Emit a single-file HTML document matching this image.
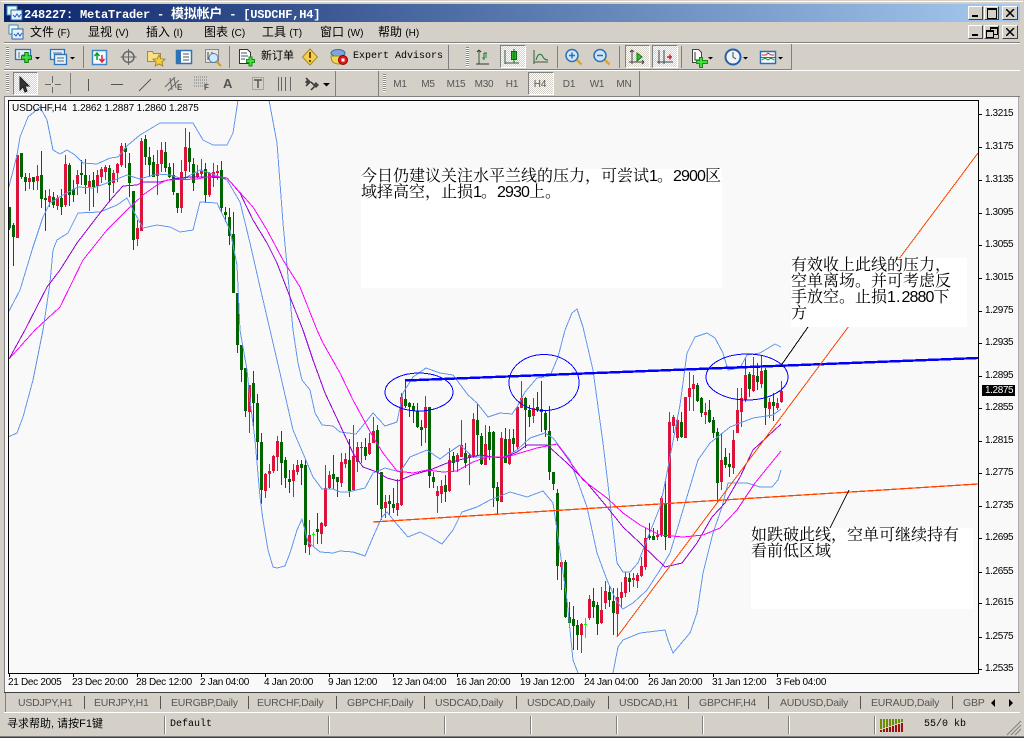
<!DOCTYPE html>
<html lang="zh"><head><meta charset="utf-8"><title>MetaTrader</title>
<style>
html,body{margin:0;padding:0;width:1024px;height:738px;overflow:hidden;background:#d4d0c8}
body{position:relative;font-family:"Liberation Sans","Noto Sans CJK SC",sans-serif}
.a,.t{position:absolute}
.t{white-space:nowrap}
.m{font-family:"Liberation Sans","WenQuanYi Zen Hei","Noto Sans CJK SC",sans-serif;font-size:12px;line-height:14px;color:#000;top:25px}
.m i{font-style:normal;font-size:10px}
.p{font-size:10px;color:#000;letter-spacing:-.4px;left:985px;line-height:10px}
.x{font-size:10px;color:#000;letter-spacing:-.3px;top:677px;line-height:11px}
.b{font-size:10.5px;color:#555;top:697px;line-height:12px;letter-spacing:-.2px}
.per{font-size:10px;color:#555;top:79px;line-height:11px;width:26px;text-align:center;letter-spacing:-.2px}
.btn{background:repeating-conic-gradient(#fff 0 25%,#d4d0c8 0 50%) 0 0/2px 2px;border:1px solid;border-color:#808080 #fff #fff #808080;box-sizing:border-box}
.wb{background:#d4d0c8;border:1px solid;border-color:#fff #404040 #404040 #fff;box-sizing:border-box;width:15px;height:14px}
.note{position:absolute;background:#fff;font-family:"Liberation Sans","WenQuanYi Zen Hei","Noto Serif CJK SC",sans-serif;font-size:16px;line-height:16px;color:#000;white-space:nowrap}
.note b{font-weight:normal;font-family:"Liberation Sans",sans-serif;letter-spacing:-.9px}
.note u{text-decoration:none;font-family:"Liberation Sans",sans-serif;letter-spacing:1px;margin-left:1px}
.mono{font-family:"Liberation Mono",monospace;font-size:10px;color:#000;line-height:12px}
.grip{position:absolute;width:3px;background:repeating-linear-gradient(#888 0 1px,#fff 1px 2px)}
</style></head><body>

<!-- title bar -->
<div class="a" style="left:1px;top:1px;width:1022px;height:1px;background:#fff"></div>
<div class="a" style="left:4px;top:4px;width:1016px;height:18px;background:linear-gradient(90deg,#0a246a,#a6caf0)"></div>
<svg class="a" style="left:6px;top:5px" width="18" height="16" viewBox="0 0 18 16"><rect x="1" y="1" width="10" height="9" fill="#dff" stroke="#4a8ab0"/><rect x="5" y="5" width="11" height="10" fill="#eef" stroke="#2a6a9a"/><path d="M7 10l2 2 2-3 2 3 2-3" stroke="#06c" fill="none"/></svg>
<div class="t" style="left:24px;top:6px;font:bold 12px/14px 'Liberation Mono','Noto Sans CJK SC',monospace;color:#fff;letter-spacing:-.2px">248227: MetaTrader - <span style="font:bold 13px/14px 'Noto Sans CJK SC',sans-serif">模拟帐户</span> - [USDCHF,H4]</div>
<div class="a wb" style="left:968px;top:6px"><div class="a" style="left:3px;top:8px;width:6px;height:2px;background:#000"></div></div>
<div class="a wb" style="left:984px;top:6px"><div class="a" style="left:2px;top:1px;width:8px;height:8px;border:1px solid #000;border-top-width:2px"></div></div>
<div class="a wb" style="left:1002px;top:6px;width:16px"><svg class="a" style="left:3px;top:2px" width="9" height="8"><path d="M0 0L8 8M8 0L0 8" stroke="#000" stroke-width="1.5"/></svg></div>
<!-- menu -->
<svg class="a" style="left:8px;top:24px" width="16" height="16" viewBox="0 0 16 16"><rect x="1" y="1" width="9" height="9" fill="#dff" stroke="#4a8ab0"/><rect x="4" y="5" width="11" height="10" fill="#eef" stroke="#2a6a9a"/><path d="M6 10l2 2 2-3 2 3 2-3" stroke="#06c" fill="none"/></svg>
<div class="t m" style="left:30px">文件 <i>(F)</i></div>
<div class="t m" style="left:88px">显视 <i>(V)</i></div>
<div class="t m" style="left:146px">插入 <i>(I)</i></div>
<div class="t m" style="left:204px">图表 <i>(C)</i></div>
<div class="t m" style="left:262px">工具 <i>(T)</i></div>
<div class="t m" style="left:320px">窗口 <i>(W)</i></div>
<div class="t m" style="left:378px">帮助 <i>(H)</i></div>
<div class="a wb" style="left:968px;top:25px"><div class="a" style="left:3px;top:8px;width:6px;height:2px;background:#000"></div></div>
<div class="a wb" style="left:984px;top:25px"><div class="a" style="left:5px;top:1px;width:6px;height:5px;border:1px solid #000;border-top-width:2px"></div><div class="a" style="left:1px;top:4px;width:6px;height:5px;border:1px solid #000;border-top-width:2px;background:#d4d0c8"></div></div>
<div class="a wb" style="left:1002px;top:25px;width:16px"><svg class="a" style="left:3px;top:2px" width="9" height="8"><path d="M0 0L8 8M8 0L0 8" stroke="#000" stroke-width="1.5"/></svg></div>

<!-- toolbar lines -->
<div class="a" style="left:4px;top:42px;width:1016px;height:1px;background:#808080"></div>
<div class="a" style="left:4px;top:43px;width:1016px;height:1px;background:#fff"></div>
<div class="a" style="left:4px;top:69px;width:787px;height:1px;background:#808080"></div>
<div class="a" style="left:791px;top:44px;width:1px;height:26px;background:#808080"></div>
<div class="a" style="left:4px;top:70px;width:1016px;height:1px;background:#fff"></div>
<div class="a" style="left:448px;top:45px;width:1px;height:24px;background:#808080"></div>
<div class="grip" style="left:6px;top:47px;height:20px"></div>
<div class="grip" style="left:466px;top:47px;height:20px"></div>
<div class="grip" style="left:6px;top:74px;height:18px"></div>
<div class="grip" style="left:383px;top:74px;height:18px"></div>
<div class="a" style="left:335px;top:71px;width:1px;height:25px;background:#808080"></div>
<div class="a" style="left:378px;top:71px;width:1px;height:25px;background:#808080"></div>
<div class="a" style="left:639px;top:71px;width:1px;height:25px;background:#808080"></div>

<!-- pressed buttons -->
<div class="a btn" style="left:13px;top:72px;width:25px;height:23px"></div>
<div class="a btn" style="left:500px;top:45px;width:26px;height:23px"></div>
<div class="a btn" style="left:625px;top:45px;width:25px;height:23px"></div>
<div class="a btn" style="left:652px;top:45px;width:26px;height:23px"></div>
<div class="a btn" style="left:528px;top:72px;width:26px;height:23px"></div>

<!-- toolbar icons -->
<svg class="a" style="left:0;top:43px" width="800" height="54" viewBox="0 43 800 54" fill="none">
 <!-- new chart -->
 <rect x="15.500" y="49.500" width="15" height="10" fill="#e4f0fb" stroke="#2f73b7" stroke-width="1.300"/><path d="M19 52v6M22 55h6" stroke="#667"/><path d="M21 57.500h11M26.500 52v11" stroke="#127a12" stroke-width="4.500"/><path d="M22 57.500h9M26.500 53v9" stroke="#3fe03f" stroke-width="2.500"/>
 <path d="M35 57h5l-2.500 2.500z" fill="#000"/>
 <!-- profiles -->
 <rect x="50.500" y="49.500" width="14" height="10" fill="#e4f0fb" stroke="#2f73b7" stroke-width="1.300"/><rect x="54.500" y="54.500" width="12" height="10" fill="#e4f0fb" stroke="#2f73b7" stroke-width="1.300"/><path d="M53 53h9M57 58h7M57 61h7" stroke="#667"/>
 <path d="M70 57h5l-2.500 2.500z" fill="#000"/>
 <rect x="83" y="46" width="1" height="22" fill="#808080"/>
 <!-- market watch -->
 <rect x="92.500" y="50.500" width="14" height="14" fill="#f6fbff" stroke="#3f86c6" stroke-width="1.500"/><path d="M97 60v-6M94.500 56l2.500-3 2.500 3" stroke="#0a9a2a" stroke-width="1.500"/><path d="M102 55v6M99.500 59l2.500 3 2.500-3" stroke="#d23" stroke-width="1.500"/>
 <!-- crosshair -->
 <circle cx="128.500" cy="57" r="5.500" stroke="#666" stroke-width="1.500"/><path d="M128.500 49v16M120.500 57h16" stroke="#666"/>
 <!-- folder star -->
 <path d="M147.500 51.500h5l1 2h7v8h-13z" fill="#f6e08a" stroke="#a68a30"/><path d="M159 55l1.800 3.700 4.200.5-3 2.800.8 4-3.800-2-3.800 2 .8-4-3-2.800 4.200-.5z" fill="#f3cf3a" stroke="#a68a30"/>
 <!-- navigator -->
 <rect x="176.500" y="50.500" width="15" height="13" fill="#fff" stroke="#2f73b7" stroke-width="1.500"/><rect x="177" y="51" width="4" height="12" fill="#2f73b7"/><path d="M183 54h6M183 57h6M183 60h6" stroke="#456"/>
 <!-- strategy tester -->
 <rect x="205.500" y="49.500" width="13" height="13" fill="#e6e6e6" stroke="#888"/><path d="M208 52v8M212 52v8" stroke="#444"/><circle cx="213.500" cy="58" r="4.500" fill="#cfe8fa" stroke="#4a80b0"/><path d="M217 62l4 4" stroke="#d69a20" stroke-width="2"/>
 <rect x="229" y="46" width="1" height="22" fill="#808080"/>
 <!-- new order -->
 <path d="M239.500 49.500h8l3 3v11h-11z" fill="#fff" stroke="#333"/><path d="M241 53h6M241 56h7M241 59h4" stroke="#456"/><path d="M246 61h9M250.500 56.500v10" stroke="#1a8a1a" stroke-width="4"/><path d="M247 61h7M250.500 57.500v8" stroke="#3fe03f" stroke-width="2"/>
 <!-- warning -->
 <path d="M310 49l7.500 8-7.500 8-7.500-8z" fill="#f6d04a" stroke="#a88a18"/><path d="M310 52v6M310 60v2" stroke="#6a4a00" stroke-width="2"/>
 <!-- EA -->
 <ellipse cx="338" cy="53" rx="7" ry="3.500" fill="#7ba6d8" stroke="#3a6a9a"/><path d="M331 56c0 7 4 8 9 8 3 0 3-3 3-5v-3z" fill="#f2d35a" stroke="#a08820"/><circle cx="343" cy="60" r="4.500" fill="#e01b1b" stroke="#800"/><rect x="341.500" y="58.500" width="3" height="3" fill="#fff"/>
 <!-- chart types -->
 <path d="M479 50v14M484 53v7M484 53h3" stroke="#3a5a3a"/><path d="M482 58h3M486 53v5" stroke="#0a9a2a"/><path d="M476 64h13M479 50l-2 2M479 50l2 2" stroke="#333"/>
 <path d="M505 50v14M505 63h14" stroke="#3a5a3a" fill="none"/><rect x="511.500" y="51.500" width="5" height="8" fill="#2db52d" stroke="#0a6a0a"/><path d="M514 49v14" stroke="#0a6a0a"/>
 <path d="M534 50v14M534 62h14" stroke="#3a5a3a"/><path d="M536 60c2-7 5-7 7-3 1 2 3 3 5 3" stroke="#0a7a2a"/>
 <rect x="557" y="46" width="1" height="22" fill="#808080"/>
 <!-- zoom in/out -->
 <circle cx="572" cy="55.500" r="6" fill="#cde6fa" stroke="#2f6fb0" stroke-width="1.500"/><path d="M569 55.500h6M572 52.500v6" stroke="#2f6fb0" stroke-width="1.500"/><path d="M577 60l4.500 4.500" stroke="#d9a528" stroke-width="2.500"/>
 <circle cx="600" cy="55.500" r="6" fill="#cde6fa" stroke="#2f6fb0" stroke-width="1.500"/><path d="M597 55.500h6" stroke="#2f6fb0" stroke-width="1.500"/><path d="M605 60l4.500 4.500" stroke="#d9a528" stroke-width="2.500"/>
 <rect x="619" y="46" width="1" height="22" fill="#808080"/>
 <!-- shift / autoscroll -->
 <path d="M632 50v14M629 62h15M632 50l-2 2M632 50l2 2M644 62l-2-2M644 62l-2 2" stroke="#444"/><path d="M637 53l5 4-5 4z" fill="#2fc02f" stroke="#0a7a0a"/>
 <path d="M659 50v14M664 50v14M657 62h16" stroke="#444"/><path d="M667 57h5M670 54.500v5" stroke="#c22" stroke-width="1.500"/>
 <rect x="681" y="46" width="1" height="22" fill="#808080"/>
 <!-- indicators -->
 <path d="M692.500 49.500h6l3 3v10h-9z" fill="#fff" stroke="#444"/><path d="M695 52v8h4" stroke="#333"/><path d="M696 62h12M701 57v11" stroke="#1a8a1a" stroke-width="4"/><path d="M697 62h10M701 58v9" stroke="#3fe03f" stroke-width="2"/>
 <path d="M708 57h5l-2.500 2.500z" fill="#000"/>
 <!-- clock -->
 <circle cx="733" cy="57" r="7.500" fill="#f0f4fa" stroke="#2360a8" stroke-width="2"/><path d="M733 52v5l3 2" stroke="#444"/>
 <path d="M743 57h5l-2.500 2.500z" fill="#000"/>
 <!-- templates -->
 <rect x="760.500" y="51.500" width="15" height="12" fill="#f4f8ff" stroke="#2f6fb0" stroke-width="1.500"/><path d="M762 55h4l2-2 3 2h3" stroke="#c33"/><path d="M762 60l3-2 3 2 3-2 3 2" stroke="#1a8a3a"/><path d="M761 57.500h14" stroke="#2f6fb0"/>
 <path d="M778 57h5l-2.500 2.500z" fill="#000"/>
 <!-- row 2 -->
 <path d="M20 77v13l3-3 2 5 2-1-2-5h4z" fill="#333" stroke="#222"/>
 <path d="M52.500 76v7M52.500 87v6M45 84.500h6M55 84.500h6" stroke="#666"/>
 <rect x="70" y="73" width="1" height="21" fill="#808080"/>
 <path d="M88.500 79v12" stroke="#555"/><path d="M111 84.500h12" stroke="#555"/><path d="M139 91l12-12" stroke="#555"/>
 <path d="M165 87l10-10M168 91l11-11M170 78l2 12M174 78l2 10" stroke="#666"/>
 <path d="M194 77h13M194 80h13M194 83h13M194 86h13" stroke="#777" stroke-dasharray="1 1"/>
 <path d="M252.500 77.500h11v12h-11z" stroke="#777" stroke-dasharray="1 1"/><path d="M254 80h8M258 80v8" stroke="#555" stroke-width="1.500"/>
 <path d="M278.500 77v14M281.500 77v14M285.500 77v14M290.500 77v14" stroke="#666"/>
 <path d="M306 78l4 4-4 4M311 82l4 4-4 4" stroke="#333" stroke-width="1.500"/><path d="M305 82l3-3 3 3-3 3zM313 85l3-3 3 3-3 3z" fill="#444"/>
 <path d="M323 83h7l-3.500 3.500z" fill="#000"/>
</svg>
<div class="t" style="left:261px;top:49px;font:11px/13px 'WenQuanYi Zen Hei','Noto Sans CJK SC',sans-serif;color:#000">新订单</div>
<div class="t mono" style="left:353px;top:51px">Expert Advisors</div>
<div class="t" style="left:177px;top:84px;font:bold 8px/8px 'Liberation Sans',sans-serif;color:#555">E</div>
<div class="t" style="left:204px;top:84px;font:bold 8px/8px 'Liberation Sans',sans-serif;color:#555">F</div>
<div class="t" style="left:223px;top:77px;font:bold 13px/14px 'Liberation Sans',sans-serif;color:#555">A</div>
<div class="t per" style="left:387px">M1</div><div class="t per" style="left:415px">M5</div><div class="t per" style="left:443px">M15</div><div class="t per" style="left:471px">M30</div><div class="t per" style="left:499px">H1</div><div class="t per" style="left:527px">H4</div><div class="t per" style="left:556px">D1</div><div class="t per" style="left:584px">W1</div><div class="t per" style="left:611px">MN</div>

<!-- chart frame -->
<div class="a" style="left:4px;top:96px;width:1016px;height:1px;background:#808080"></div>
<div class="a" style="left:5px;top:97px;width:1013px;height:595px;background:#f9f9f9"></div>
<div class="a" style="left:4px;top:97px;width:1px;height:596px;background:#808080"></div>
<div class="a" style="left:1018px;top:97px;width:1px;height:596px;background:#aaa"></div>
<div class="a" style="left:8px;top:100px;width:971px;height:574px;box-sizing:border-box;border:1px solid #000;background:#f9f9f9"></div>

<svg class="a" style="left:0;top:0" width="1024" height="738" viewBox="0 0 1024 738" fill="none">
<defs><clipPath id="c"><rect x="9" y="101" width="969" height="572"/></clipPath></defs>
<g clip-path="url(#c)">
<!-- wicks -->
<g transform="translate(.5 0)" shape-rendering="crispEdges">
<path stroke="#006400" d="M9 207V230M13 223V266M21 153V179M25 173V191M33 177V190M41 151V208M45 190V231M53 192V208M61 189V215M69 163V206M73 180V202M81 160V185M85 159V194M93 172V207M109 165V201M125 143V168M129 153V197M133 191V250M145 135V165M149 147V177M153 155V177M165 142V172M169 163V178M173 163V195M177 193V213M189 132V172M193 158V191M205 163V203M221 161V213M225 207V222M229 208V245M233 212V293M237 293V353M241 345V382M245 368V417M253 371V427M257 394V460M261 433V504M281 431V485M285 457V488M289 470V493M301 460V485M305 460V553M317 513V544M333 455V489M337 477V497M349 439V497M365 438V460M377 425V505M381 472V520M389 495V515M393 488V513M405 379V408M409 402V417M413 403V423M417 403V428M421 420V446M429 407V488M433 472V488M445 475V502M453 452V472M465 443V468M477 404V455M481 433V465M489 426V460M493 431V507M497 482V514M505 428V463M513 429V452M525 397V448M529 405V427M537 392V412M541 381V432M545 410V437M549 406V480M553 472V490M557 489V580M565 560V618M569 602V628M573 606V650M577 620V650M593 588V618M597 602V635M609 586V607M613 588V635M629 573V592M649 523V540M653 528V539M665 479V550M681 412V438M697 383V402M701 397V417M709 400V423M713 417V438M717 428V502M725 448V468M729 453V477M749 372V397M757 363V390M765 368V425M773 393V421"/>
<path stroke="#dc143c" d="M17 155V238M29 173V189M37 165V190M49 189V207M57 195V210M65 155V207M77 170V195M89 175V211M97 170V193M101 167V183M105 165V180M113 170V193M117 163V182M121 143V167M137 220V246M141 138V231M157 150V195M161 142V172M181 160V213M185 128V180M197 165V178M201 159V177M209 172V197M213 163V187M217 165V180M249 385V433M265 473V498M269 464V488M273 455V473M277 436V471M293 464V497M297 460V475M309 520V555M321 522V544M325 465V527M329 471V489M341 453V487M345 453V468M353 425V490M357 442V472M361 442V463M369 433V455M373 417V443M385 495V518M397 479V516M401 393V506M425 396V443M437 486V513M441 480V503M449 448V492M457 453V472M461 420V457M469 453V485M473 413V458M485 425V465M501 432V502M509 429V465M517 406V450M521 381V408M533 398V423M561 560V590M581 623V653M589 595V620M601 587V624M605 581V609M617 588V637M621 582V608M625 572V597M633 573V587M637 573V588M641 557V577M645 528V570M657 530V540M661 496V537M669 412V538M673 415V433M677 417V441M685 397V438M689 372V411M693 375V411M705 403V424M721 433V490M733 430V474M737 388V433M741 388V427M745 358V402M753 357V392M761 356V388M769 398V418M777 398V410M781 381V403"/>
<path stroke="#00ff00" d="M313 532V547M585 618V638"/>
</g>
<!-- bodies -->
<g transform="translate(.5 0)" stroke-width="3" shape-rendering="crispEdges">
<path stroke="#006400" d="M9 207V228M13 225V237M21 153V177M25 177V182M33 177V182M41 175V199M45 198V200M53 197V205M61 198V207M69 165V195M73 189V195M81 173V175M85 175V185M93 180V187M109 168V185M125 148V152M129 163V183M133 191V240M145 139V157M149 157V165M153 162V177M165 152V168M169 167V177M173 175V192M177 193V208M189 148V162M193 164V183M205 169V195M221 170V208M225 212V215M229 217V236M233 234V293M237 293V345M241 345V370M245 368V411M253 383V403M257 403V442M261 442V490M281 442V463M285 460V478M289 479V482M301 464V468M305 465V545M317 529V532M333 474V479M337 477V482M349 460V491M365 447V456M377 430V472M381 472V509M389 501V504M393 504V508M405 399V406M409 403V407M413 406V411M417 411V427M421 427V430M429 407V476M433 477V482M445 485V492M453 456V463M465 453V463M477 420V435M481 436V464M489 432V450M493 432V488M497 487V501M505 439V463M513 438V444M525 398V410M529 410V417M537 407V410M541 409V412M545 413V430M549 431V472M553 472V484M557 493V566M565 562V617M569 617V623M573 619V626M577 625V635M593 601V607M597 605V624M609 592V600M613 601V613M629 578V582M649 536V538M653 536V540M665 504V537M681 422V437M697 385V401M701 398V413M709 410V422M713 420V433M717 432V483M725 457V465M729 464V467M749 374V389M757 376V382M765 370V408M773 402V406"/>
<path stroke="#dc143c" d="M17 155V238M29 178V182M37 176V181M49 196V202M57 198V206M65 164V205M77 175V184M89 181V187M97 175V186M101 169V177M105 167V172M113 173V183M117 164V173M121 146V165M137 228V239M141 141V231M157 164V176M161 150V164M181 172V208M185 147V171M197 173V177M201 171V174M209 173V195M213 172V178M217 171V173M249 385V412M265 474V491M269 471V474M273 456V471M277 441V457M293 470V481M297 465V472M309 535V547M321 523V534M325 488V526M329 475V488M341 462V483M345 459V464M353 456V490M357 447V462M361 447V448M369 443V454M373 431V443M385 502V508M397 503V510M401 397V505M425 407V428M437 491V496M441 486V494M449 460V491M457 455V462M461 445V457M469 455V458M473 419V457M485 444V465M501 438V502M509 439V464M517 407V447M521 398V408M533 408V416M561 562V567M581 624V635M589 599V618M601 610V623M605 591V603M617 597V614M621 592V598M625 577V593M633 578V580M637 575V581M641 566V576M645 538V567M657 535V537M661 498V535M669 422V538M673 417V426M677 420V438M685 397V438M689 388V397M693 384V389M705 412V415M721 460V482M733 440V468M737 410V433M741 398V412M745 375V400M753 375V391M761 371V384M769 402V409M777 403V408M781 391V402"/>
<path stroke="#00ff00" d="M313 534V535M585 624V625"/>
</g>
<g shape-rendering="crispEdges">
<!-- bollinger -->
<g stroke="#6495ed" stroke-width="1" stroke-linejoin="round">
<polyline points="8,190 12,175 17,155 20,137 28,117 40,107 47,120 53,150 60,154 67,150 75,155 83,163 97,164 110,158 118,157 128,145 140,135 160,123 193,123 203,140 213,145 227,145 233,133 238,100"/>
<polyline points="269,100 277,143 283,223 293,330 298,363 302,380 310,390 315,413 322,425 333,426 340,432 356,434 373,413 385,426 397,422 403,393 413,377 426,368 440,373 453,375 468,395 477,403 488,417 500,413 512,414 517,407 525,392 537,378 550,376 558,357 565,330 572,313 577,309 583,327 593,370 603,443 609,493 612,520 615,545 617,563 623,572 630,572 638,563 648,537 660,507 665,483 670,457 680,405 687,353 695,337 707,333 715,338 723,353 728,370 740,368 747,355 760,353 775,344 781,347"/>
<polyline points="8,313 20,290 33,247 43,217 50,203 63,195 78,187 93,188 107,183 127,175 140,179 157,174 170,175 183,179 200,170 213,174 227,180 240,202 250,243 260,287 270,330 280,373 293,430 305,458 313,477 322,489 333,489 340,492 348,492 365,488 373,473 385,468 400,472 410,457 427,450 440,459 448,453 460,445 473,457 493,457 503,458 517,450 530,438 545,433 553,438 570,460 587,507 597,553 607,580 617,602 623,609 633,603 647,590 660,570 670,553 680,520 698,460 710,443 730,427 740,423 753,418 773,415 781,409"/>
<polyline points="8,437 17,433 23,417 33,380 43,330 50,283 53,250 57,240 68,233 78,213 100,212 117,205 127,198 133,210 143,228 157,225 170,227 180,232 193,230 200,202 217,203 230,230 237,265 240,330 247,370 250,400 255,440 260,497 263,520 268,550 273,567 277,568 285,566 290,553 297,530 302,519 308,542 320,552 333,553 340,551 353,552 365,556 373,537 382,517 387,512 395,522 408,537 420,532 430,537 442,544 453,530 462,512 477,507 490,500 510,492 527,497 543,491 553,503 557,530 567,600 573,660 578,673"/>
<polyline points="613,673 618,647 623,640 640,633 665,630 668,640 673,653 690,633 697,613 703,573 713,533 722,507 728,483 747,483 760,487 772,487 778,480 781,470"/>
</g>
<polyline stroke="#9400d3" stroke-width="1" stroke-linejoin="round" points="9,359 25,330 47,287 60,270 77,243 100,213 113,197 123,186 137,185 143,182 160,182 173,179 190,177 210,177 227,178 240,193 253,220 267,243 277,263 290,297 303,330 313,360 325,393 340,425 353,453 363,467 377,472 387,478 398,481 412,475 430,470 447,463 467,458 480,455 493,457 503,458 517,452 527,445 547,445 567,463 587,483 607,507 623,527 640,543 665,567 682,563 697,543 712,517 725,503 740,477 753,450 781,424"/>
<polyline stroke="#ff00ff" stroke-width="1" stroke-linejoin="round" points="9,359 35,330 60,307 83,260 107,230 127,210 143,195 157,185 167,180 197,179 213,176 227,178 253,207 267,230 283,260 300,287 317,330 323,343 340,373 353,400 373,437 383,453 397,471 413,473 427,470 443,472 457,471 473,462 487,457 507,457 520,453 537,448 557,444 563,452 583,480 607,498 623,513 640,525 660,535 683,537 703,535 720,528 737,510 755,483 781,451"/>
<!-- trendlines -->
<path d="M405 380.500L978 358" stroke="#0000ff" stroke-width="2.400"/>
<path d="M373 522L978 484" stroke="#ff4500" stroke-width="1.300"/>
<path d="M617 637L978 153" stroke="#ff4500" stroke-width="1"/>
<ellipse cx="419" cy="392" rx="34" ry="19" stroke="#0000ff"/>
<ellipse cx="544" cy="382.500" rx="35" ry="28" stroke="#0000ff"/>
<ellipse cx="747" cy="377" rx="41" ry="23" stroke="#0000ff"/>
<path d="M780 367L808 327M849 490L830 528" stroke="#000"/>
</g>
</g>
<!-- ticks -->
<path stroke="#000" shape-rendering="crispEdges" d="M978 114.500h4M978 147.500h4M978 180.500h4M978 213.500h4M978 245.500h4M978 278.500h4M978 311.500h4M978 343.500h4M978 376.500h4M978 408.500h4M978 441.500h4M978 473.500h4M978 506.500h4M978 538.500h4M978 572.500h4M978 603.500h4M978 637.500h4M978 669.500h4M9.500 673v4M73.500 673v4M137.500 673v4M201.500 673v4M265.500 673v4M329.500 673v4M393.500 673v4M457.500 673v4M521.500 673v4M585.500 673v4M649.500 673v4M713.500 673v4M777.500 673v4"/>
</svg>

<!-- notes -->
<div class="note" style="left:361px;top:169px;width:361px;height:119px">今日仍建议关注水平兰线的压力&#xFF0C;可尝试<b>1</b>。<b>2900</b>区<br>域择高空&#xFF0C;止损<b>1</b>。<b>2930</b>上。</div>
<div class="note" style="left:791px;top:258px;width:176px;height:69px">有效收上此线的压力&#xFF0C;<br>空单离场。并可考虑反<br>手放空。止损<b>1</b><u>.</u><b>2880</b>下<br>方</div>
<div class="note" style="left:751px;top:528px;width:222px;height:81px">如跌破此线&#xFF0C;空单可继续持有<br>看前低区域</div>

<div class="t" style="left:12px;top:103px;font-size:10px;line-height:12px;color:#000;letter-spacing:-.15px">USDCHF,H4&nbsp; 1.2862 1.2887 1.2860 1.2875</div>

<!-- price axis -->
<div class="t p" style="top:109px">1.3215</div><div class="t p" style="top:142px">1.3175</div><div class="t p" style="top:175px">1.3135</div><div class="t p" style="top:208px">1.3095</div><div class="t p" style="top:240px">1.3055</div><div class="t p" style="top:273px">1.3015</div><div class="t p" style="top:306px">1.2975</div><div class="t p" style="top:338px">1.2935</div><div class="t p" style="top:371px">1.2895</div>
<div class="a" style="left:982px;top:385px;width:33px;height:11px;background:#000"></div><div class="t p" style="top:386px;color:#fff">1.2875</div>
<div class="t p" style="top:403px">1.2855</div><div class="t p" style="top:436px">1.2815</div><div class="t p" style="top:468px">1.2775</div><div class="t p" style="top:501px">1.2735</div><div class="t p" style="top:533px">1.2695</div><div class="t p" style="top:567px">1.2655</div><div class="t p" style="top:598px">1.2615</div><div class="t p" style="top:632px">1.2575</div><div class="t p" style="top:664px">1.2535</div>

<!-- time axis -->
<div class="t x" style="left:8px">21 Dec 2005</div><div class="t x" style="left:72px">23 Dec 20:00</div><div class="t x" style="left:136px">28 Dec 12:00</div><div class="t x" style="left:200px">2 Jan 04:00</div><div class="t x" style="left:264px">4 Jan 20:00</div><div class="t x" style="left:328px">9 Jan 12:00</div><div class="t x" style="left:392px">12 Jan 04:00</div><div class="t x" style="left:456px">16 Jan 20:00</div><div class="t x" style="left:520px">19 Jan 12:00</div><div class="t x" style="left:584px">24 Jan 04:00</div><div class="t x" style="left:648px">26 Jan 20:00</div><div class="t x" style="left:712px">31 Jan 12:00</div><div class="t x" style="left:776px">3 Feb 04:00</div>

<!-- tabs -->
<div class="a" style="left:4px;top:692px;width:1016px;height:1px;background:#404040"></div>
<div class="a" style="left:5px;top:693px;width:1px;height:19px;background:#808080"></div>
<div class="a" style="left:4px;top:712px;width:1016px;height:1px;background:#fff"></div>
<div class="t b" style="left:18px">USDJPY,H1</div><div class="t b" style="left:94px">EURJPY,H1</div><div class="t b" style="left:171px">EURGBP,Daily</div><div class="t b" style="left:257px">EURCHF,Daily</div><div class="t b" style="left:347px">GBPCHF,Daily</div><div class="t b" style="left:435px">USDCAD,Daily</div><div class="t b" style="left:527px">USDCAD,Daily</div><div class="t b" style="left:619px">USDCAD,H1</div><div class="t b" style="left:699px">GBPCHF,H4</div><div class="t b" style="left:780px">AUDUSD,Daily</div><div class="t b" style="left:871px">EURAUD,Daily</div>
<div class="t b" style="left:963px;width:22px;overflow:hidden">GBPCHF</div>
<svg class="a" style="left:0;top:693px" width="1024" height="20"><path stroke="#555" shape-rendering="crispEdges" d="M84.500 3v13M160.500 3v13M248.500 3v13M336.500 3v13M424.500 3v13M516.500 3v13M608.500 3v13M688.500 3v13M768.500 3v13M860.500 3v13M952.500 3v13"/><path d="M995 6v8l-4-4zM1009 6v8l4-4z" fill="#000"/></svg>

<!-- status bar -->
<div class="t" style="left:7px;top:717px;font:11px/14px 'Liberation Sans','WenQuanYi Zen Hei','Noto Sans CJK SC',sans-serif;color:#000">寻求帮助, 请按F1键</div>
<div class="t mono" style="left:170px;top:719px">Default</div>
<div class="t mono" style="left:924px;top:719px">55/0 kb</div>
<svg class="a" style="left:0;top:713px" width="1024" height="25" shape-rendering="crispEdges">
<path stroke="#808080" d="M164.500 3v18M328.500 3v18M444.500 3v18M530.500 3v18M616.500 3v18M702.500 3v18M788.500 3v18M874.500 3v18"/>
<path stroke="#fff" d="M165.500 3v18M329.500 3v18M445.500 3v18M531.500 3v18M617.500 3v18M703.500 3v18M789.500 3v18M875.500 3v18"/>
<path fill="#6b8e00" d="M880 6h2v10h-2zM883 6h2v9h-2zM886 6h2v8h-2zM889 6h2v7h-2zM892 6h2v6h-2zM895 6h2v5h-2zM898 6h2v4h-2zM901 6h2v3h-2z"/>
<path fill="#a01010" d="M880 17h2v2h-2zM883 16h2v3h-2zM886 15h2v4h-2zM889 14h2v5h-2zM892 13h2v6h-2zM895 12h2v7h-2zM898 11h2v8h-2zM901 10h2v9h-2z"/>
<path stroke="#808080" d="M1007 22L1021 8M1011 22L1021 12M1015 22L1021 16" shape-rendering="auto"/>
<rect x="0" y="23" width="1024" height="1" fill="#808080"/><rect x="0" y="24" width="1024" height="1" fill="#404040"/>
</svg>
</body></html>
